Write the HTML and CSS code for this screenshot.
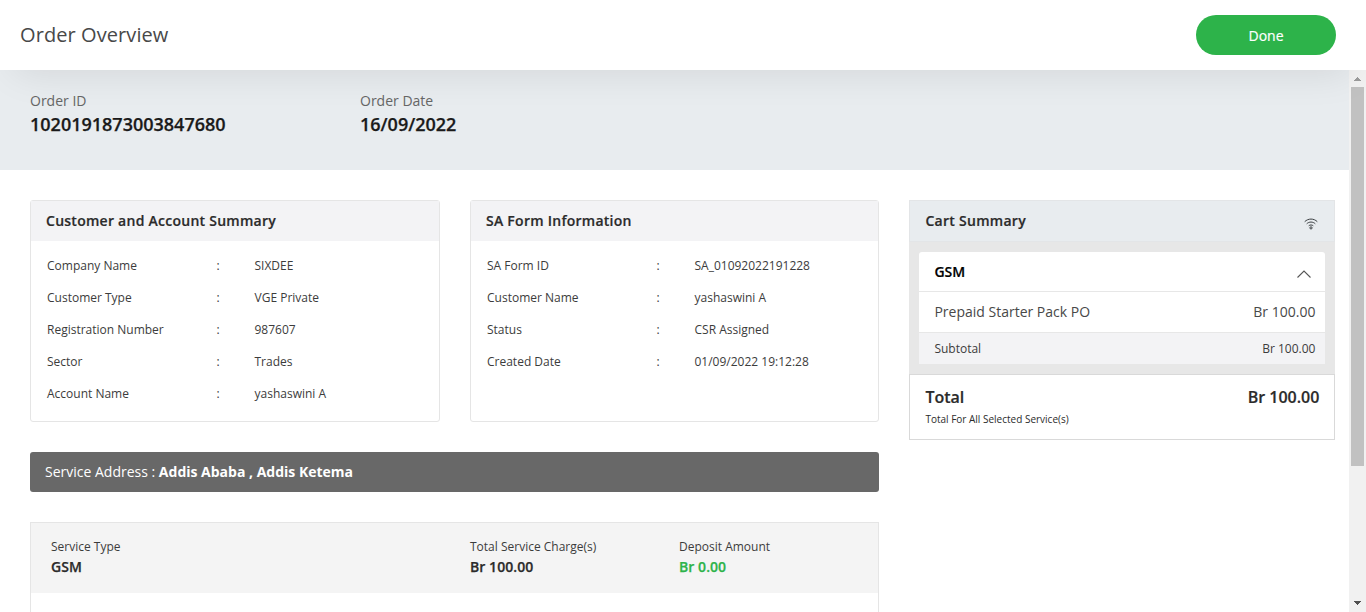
FILE: index.html
```html
<!DOCTYPE html>
<html lang="en">
<head>
<meta charset="utf-8">
<title>Order Overview</title>
<link rel="stylesheet" href="styles.css">
</head>
<body>
<header class="topbar">
  <h1 class="title">Order Overview</h1>
  <button class="done">Done</button>
</header>
<div class="viewport">
  <main class="content">
    <section class="order-band">
      <div class="order-item"><div class="order-label">Order ID</div><div class="order-value">1020191873003847680</div></div>
      <div class="order-item"><div class="order-label">Order Date</div><div class="order-value">16/09/2022</div></div>
    </section>
    <div class="columns">
      <div class="left">
        <div class="panels">
          <section class="panel">
            <h2 class="panel-head">Customer and Account Summary</h2>
            <div class="rows">
              <span>Company Name</span><span>:</span><span>SIXDEE</span>
              <span>Customer Type</span><span>:</span><span>VGE Private</span>
              <span>Registration Number</span><span>:</span><span>987607</span>
              <span>Sector</span><span>:</span><span>Trades</span>
              <span>Account Name</span><span>:</span><span>yashaswini A</span>
            </div>
          </section>
          <section class="panel">
            <h2 class="panel-head">SA Form Information</h2>
            <div class="rows">
              <span>SA Form ID</span><span>:</span><span>SA_01092022191228</span>
              <span>Customer Name</span><span>:</span><span>yashaswini A</span>
              <span>Status</span><span>:</span><span>CSR Assigned</span>
              <span>Created Date</span><span>:</span><span>01/09/2022 19:12:28</span>
            </div>
          </section>
        </div>
        <div class="address">Service Address : <b>Addis Ababa , Addis Ketema</b></div>
        <section class="service">
          <div class="service-head">
            <div><div class="s-label">Service Type</div><div class="s-value">GSM</div></div>
            <div><div class="s-label">Total Service Charge(s)</div><div class="s-value">Br 100.00</div></div>
            <div><div class="s-label">Deposit Amount</div><div class="s-value green">Br 0.00</div></div>
          </div>
        </section>
      </div>
      <aside class="cart">
        <div class="cart-head">
          <h2 class="cart-title">Cart Summary</h2>
          <svg class="wifi" width="14" height="12" viewBox="0 0 14 12" fill="none" stroke="#3c4043" stroke-width="1">
            <path d="M.7 3.700C4.200.2 9.800.2 13.300 3.700M2.700 5.800C5.100 3.500 8.900 3.500 11.300 5.800M4.700 7.800C6 6.700 8 6.700 9.300 7.800"/>
            <circle cx="7" cy="9.900" r="1.100"/>
          </svg>
        </div>
        <div class="cart-body">
          <div class="cart-card">
            <div class="group"><span>GSM</span>
              <svg class="chev" width="14" height="8" viewBox="0 0 14 8" fill="none" stroke="#555" stroke-width="1.100"><path d="M.5 7.500 7 1l6.500 6.500"/></svg>
            </div>
            <div class="item"><span>Prepaid Starter Pack PO</span><span>Br 100.00</span></div>
            <div class="subtotal"><span>Subtotal</span><span>Br 100.00</span></div>
          </div>
        </div>
        <div class="total">
          <div class="total-row"><span>Total</span><span>Br 100.00</span></div>
          <div class="total-note">Total For All Selected Service(s)</div>
        </div>
      </aside>
    </div>
  </main>
  <div class="scrollbar">
    <svg class="arrow" width="17" height="17" viewBox="0 0 17 17" shape-rendering="crispEdges"><path fill="#9b9b9b" d="M8 7h1v1h1v1h1v1h1v1H5v-1h1V9h1V8h1z"/></svg>
    <div class="thumb"></div>
    <svg class="arrow" width="17" height="17" viewBox="0 0 17 17" shape-rendering="crispEdges"><path fill="#505050" d="M5 6h7v1h-1v1h-1v1H9v1H8V9H7V8H6V7H5z"/></svg>
  </div>
</div>
</body>
</html>
```
FILE: styles.css
```css
* { box-sizing: border-box; }
body {
  margin: 0;
  height: 612px;
  overflow: hidden;
  background: #fff;
  color: #2b2b2b;
  font-family: "Open Sans", sans-serif;
  white-space: nowrap;
}
h1, h2 { margin: 0; }
.topbar {
  position: relative;
  z-index: 1;
  height: 70px;
  padding: 0 30px 0 20px;
  display: flex;
  align-items: center;
  justify-content: space-between;
  background: #fff;
  box-shadow: 0 15px 40px -15px rgba(0, 0, 0, .11);
}
.title { font-size: 20px; font-weight: 400; color: #484848; line-height: 28px; letter-spacing: .08px; }
.done {
  width: 140px;
  height: 40px;
  border: 0;
  border-radius: 20px;
  padding: 0;
  background: #2db34a;
  color: #fff;
  font: 400 14px "Open Sans", sans-serif;
  -webkit-text-stroke: .2px #fff;
}
.viewport { display: flex; height: 542px; }
.content { width: 1349px; height: 542px; overflow: hidden; }
.order-band {
  height: 100px;
  padding: 21px 30px 0;
  display: flex;
  background: #e8ecef;
}
.order-item { width: 330px; }
.order-label { font-size: 14px; line-height: 20px; color: #666; }
.order-value { font-size: 18px; line-height: 27px; font-weight: 600; color: #1a1a1a; -webkit-text-stroke: .25px; }
.columns { display: flex; gap: 30px; padding: 30px 14px 0 30px; }
.left { width: 849px; }
.panels { display: grid; grid-template-columns: 410px 409px; gap: 30px; }
.panel { height: 222px; border: 1px solid #e5e5e5; border-radius: 3px; }
.panel-head {
  height: 40px;
  padding-left: 15px;
  background: #f3f3f5;
  font-size: 14px;
  line-height: 39px;
  font-weight: 600;
  letter-spacing: .26px;
  -webkit-text-stroke: .2px;
}
.rows {
  display: grid;
  grid-template-columns: 169.500px 38px 1fr;
  grid-auto-rows: 32px;
  padding: 9px 0 0 16px;
  color: #3c3c3c;
  font-size: 12px;
  line-height: 32px;
}
.address {
  height: 40px;
  margin-top: 30px;
  padding-left: 15px;
  border-radius: 3px;
  background: #686868;
  color: #fff;
  font-size: 14px;
  line-height: 39px;
}
.address b { font-weight: 700; }
.service { height: 200px; margin-top: 30px; border: 1px solid #e5e5e5; }
.service-head {
  height: 70px;
  padding: 14px 0 0 20px;
  display: grid;
  grid-template-columns: 419px 209px 1fr;
  background: #f4f4f4;
}
.s-label { color: #3c3c3c; font-size: 12px; line-height: 20px; }
.s-value { font-size: 14px; line-height: 20px; font-weight: 600; letter-spacing: .06px; -webkit-text-stroke: .25px; }
.s-value.green { color: #2db34a; }
.cart { width: 426px; }
.cart-head {
  height: 42px;
  padding: 0 16px 0 15.400px;
  display: flex;
  justify-content: space-between;
  border: 1px solid #e3e5e7;
  background: #e8ecef;
}
.cart-title { font-size: 14px; line-height: 39px; font-weight: 600; letter-spacing: .28px; -webkit-text-stroke: .2px; }
.wifi { margin-top: 17px; }
.cart-body { padding: 10px; background: #e7e7e7; }
.cart-card { background: #fff; border-radius: 3px 3px 0 0; }
.group, .item, .subtotal, .total-row { display: flex; justify-content: space-between; }
.group {
  height: 40px;
  padding: 0 14px 0 15.400px;
  border-bottom: 1px solid #e7e7e7;
  color: #000;
  font-size: 14px;
  line-height: 40px;
  font-weight: 600;
}
.group span { -webkit-text-stroke: .2px; }
.chev { margin-top: 18px; }
.item {
  height: 41px;
  padding: 0 9.600px 0 15.400px;
  border-bottom: 1px solid #e7e7e7;
  color: #484848;
  font-size: 14px;
  line-height: 40px;
}
.subtotal {
  height: 31px;
  padding: 0 9.600px 0 15.400px;
  background: #f3f3f5;
  color: #3c3c3c;
  font-size: 12px;
  line-height: 31px;
}
.total { height: 66px; padding: 10px 14.600px 10px 15.400px; border: 1px solid #d9d9d9; }
.total-row { font-size: 16px; line-height: 24px; font-weight: 600; -webkit-text-stroke: .2px; }
.total-note { font-size: 10px; line-height: 20px; }
.scrollbar { width: 17px; height: 542px; background: #f1f1f1; display: flex; flex-direction: column; }
.arrow { display: block; flex: none; }
.thumb { width: 13px; height: 379px; margin: 0 2px auto; background: #c1c1c1; }
```
